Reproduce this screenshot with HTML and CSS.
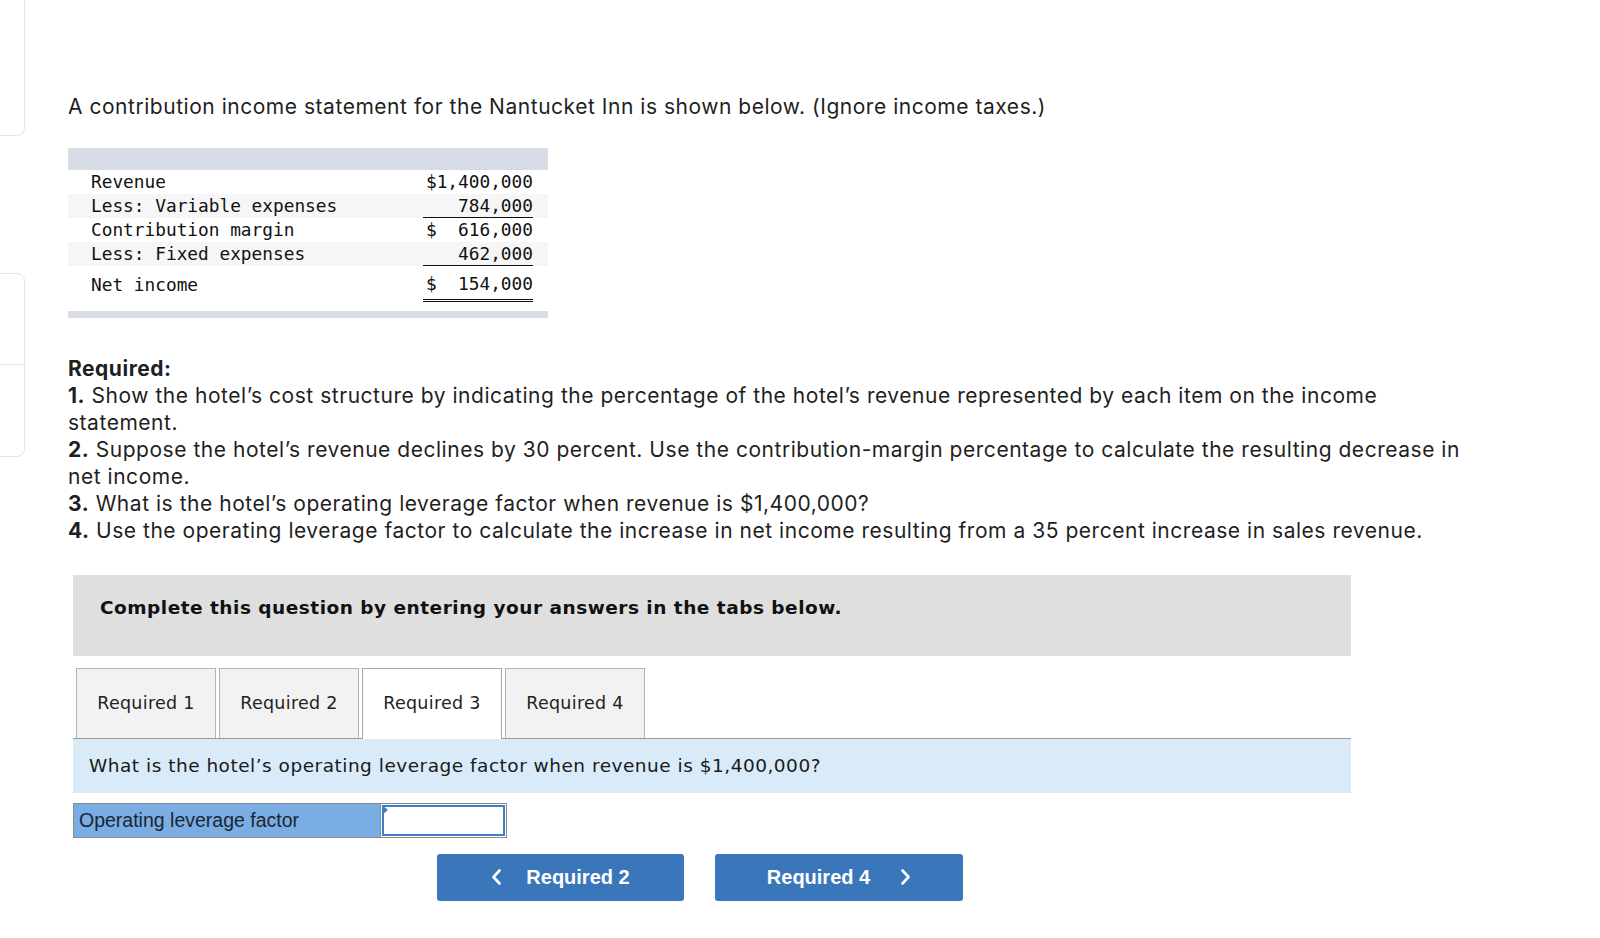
FILE: index.html
```html
<!DOCTYPE html>
<html lang="en">
<head>
<meta charset="utf-8">
<title>Nantucket Inn</title>
<link rel="stylesheet" href="styles.css">
</head>
<body>
<div class="page">
  <aside class="rail">
    <div class="rail-card rail-card-top"></div>
    <div class="rail-card rail-card-mid"><div class="rail-div"></div></div>
  </aside>
  <main class="main">
    <p class="intro">A contribution income statement for the Nantucket Inn is shown below. (Ignore income taxes.)</p>
    <div class="stmt">
      <div class="stmt-bar"></div>
      <table class="stmt-table">
        <tr><td class="lbl">Revenue</td><td class="num">$1,400,000</td><td class="pad"></td></tr>
        <tr class="alt"><td class="lbl">Less: Variable expenses</td><td class="num ul">  784,000</td><td class="pad"></td></tr>
        <tr><td class="lbl">Contribution margin</td><td class="num">$  616,000</td><td class="pad"></td></tr>
        <tr class="alt"><td class="lbl">Less: Fixed expenses</td><td class="num ul">  462,000</td><td class="pad"></td></tr>
        <tr class="net"><td class="lbl">Net income</td><td class="num dbl">$  154,000</td><td class="pad"></td></tr>
      </table>
      <div class="stmt-bar stmt-bar-bottom"></div>
    </div>
    <div class="required">
      <p><b>Required:</b></p>
      <p><b>1.</b> Show the hotel’s cost structure by indicating the percentage of the hotel’s revenue represented by each item on the income statement.</p>
      <p><b>2.</b> Suppose the hotel’s revenue declines by 30 percent. Use the contribution-margin percentage to calculate the resulting decrease in net income.</p>
      <p><b>3.</b> What is the hotel’s operating leverage factor when revenue is $1,400,000?</p>
      <p><b>4.</b> Use the operating leverage factor to calculate the increase in net income resulting from a 35 percent increase in sales revenue.</p>
    </div>
    <section class="question">
      <div class="instr">Complete this question by entering your answers in the tabs below.</div>
      <div class="tabs">
        <div class="tab">Required 1</div>
        <div class="tab">Required 2</div>
        <div class="tab tab-active">Required 3</div>
        <div class="tab">Required 4</div>
      </div>
      <div class="prompt">What is the hotel’s operating leverage factor when revenue is $1,400,000?</div>
      <div class="answer-row">
        <div class="answer-label">Operating leverage factor</div>
        <div class="answer-input"><span class="flag"></span></div>
      </div>
      <div class="nav">
        <button class="nav-btn"><svg class="chev" width="11" height="16" viewBox="0 0 11 16"><polyline points="8.5,1.5 2.5,8 8.5,14.5" fill="none" stroke="#fff" stroke-width="2.6" stroke-linecap="round" stroke-linejoin="round"/></svg><span>Required 2</span></button>
        <button class="nav-btn nav-next"><span>Required 4</span><svg class="chev" width="11" height="16" viewBox="0 0 11 16"><polyline points="2.5,1.5 8.5,8 2.5,14.5" fill="none" stroke="#fff" stroke-width="2.6" stroke-linecap="round" stroke-linejoin="round"/></svg></button>
      </div>
    </section>
  </main>
</div>
</body>
</html>
```
FILE: styles.css
```css
html, body {
  margin: 0;
  padding: 0;
  background: #fff;
}
body {
  font-family: Inter, "Open Sans", sans-serif;
  color: #1f1f1f;
}
.page {
  display: flex;
  align-items: flex-start;
  overflow: hidden;
  min-height: 938px;
}
.rail {
  width: 25px;
  flex-shrink: 0;
}
.rail-card {
  box-sizing: border-box;
  width: 40px;
  margin-left: -15px;
  border: 1px solid #e4e4e4;
  background: #fff;
}
.rail-card-top {
  margin-top: -12px;
  height: 148px;
  border-radius: 0 0 8px 0;
}
.rail-card-mid {
  margin-top: 137px;
  height: 184px;
  border-radius: 0 8px 8px 0;
  padding-top: 90px;
}
.rail-div {
  border-top: 1px solid #e4e4e4;
}
.main {
  margin-left: 43px;
  padding-top: 93px;
  width: 1420px;
}
.intro {
  margin: 0;
  font-size: 21px;
  letter-spacing: 0.53px;
  line-height: 27px;
}
.stmt {
  margin-top: 28px;
  width: 480px;
}
.stmt-bar {
  height: 22px;
  background: #d8dce6;
}
.stmt-bar-bottom {
  height: 7px;
  margin-top: 9px;
}
.stmt-table {
  width: 100%;
  border-collapse: collapse;
  font-family: "DejaVu Sans Mono", "Liberation Mono", monospace;
  font-size: 17.8px;
  color: #111;
}
.stmt-table td {
  padding: 0;
  height: 23.5px;
  line-height: 23.5px;
  white-space: pre;
}
.stmt-table .alt td {
  background: #f6f6f6;
}
.stmt-table .lbl {
  padding-left: 23px;
}
.stmt-table .num {
  width: 110px;
  text-align: right;
}
.stmt-table .pad {
  width: 15px;
}
.stmt-table .ul {
  border-bottom: 1px solid #111;
}
.stmt-table .net td {
  padding-top: 6px;
  padding-bottom: 3px;
}
.stmt-table .net .dbl {
  border-bottom: 3px double #111;
}
.required {
  margin-top: 37px;
  width: 1406px;
  font-size: 21px;
  letter-spacing: 0.53px;
  line-height: 27px;
}
.required p {
  margin: 0;
}
.question {
  margin-top: 31px;
  margin-left: 5px;
  width: 1278px;
}
.instr {
  box-sizing: border-box;
  height: 81px;
  background: #dfdfdf;
  padding: 22px 0 0 27px;
  font-family: "DejaVu Sans", Verdana, sans-serif;
  font-weight: bold;
  font-size: 18.5px;
  letter-spacing: 0.5px;
  line-height: 22px;
  color: #111;
}
.tabs {
  display: flex;
  align-items: flex-end;
  gap: 3px;
  margin-top: 12px;
  padding-left: 3px;
  border-bottom: 1px solid #999;
}
.tab {
  box-sizing: border-box;
  width: 140px;
  height: 70px;
  border: 1px solid #b4b4b4;
  border-bottom: none;
  background: #f2f2f2;
  display: flex;
  align-items: center;
  justify-content: center;
  font-family: "DejaVu Sans", Verdana, sans-serif;
  font-size: 17.5px;
  letter-spacing: 0.3px;
  color: #222;
}
.tab-active {
  background: #fff;
  border-color: #a8a8a8;
  height: 71px;
  padding-bottom: 1px;
  margin-bottom: -1px;
}
.prompt {
  box-sizing: border-box;
  height: 54px;
  background: #d9ebf9;
  padding-left: 16px;
  display: flex;
  align-items: center;
  font-family: "DejaVu Sans", Verdana, sans-serif;
  font-size: 18.5px;
  letter-spacing: 0.5px;
  color: #1a1a1a;
}
.answer-row {
  display: flex;
  box-sizing: border-box;
  margin-top: 10px;
  width: 434px;
  height: 35px;
  border: 1px solid #8a8a8a;
}
.answer-label {
  width: 301px;
  background: #7aade3;
  border-right: 1px solid #8a8a8a;
  padding-left: 5px;
  display: flex;
  align-items: center;
  font-family: "Liberation Sans", Arial, sans-serif;
  font-size: 19.5px;
  color: #1c2633;
}
.answer-input {
  position: relative;
  flex: 1;
  background: #fff;
  box-shadow: inset 0 0 0 1px #fff, inset 0 0 0 3px #3d7fc7;
}
.flag {
  position: absolute;
  left: 1px;
  top: 1px;
  width: 0;
  height: 0;
  border-top: 5px solid transparent;
  border-bottom: 5px solid transparent;
  border-left: 6px solid #3d7fc7;
}
.nav {
  display: flex;
  gap: 31px;
  margin-top: 16px;
  padding-left: 364px;
}
.nav-btn {
  width: 247px;
  height: 47px;
  border: none;
  border-radius: 3px;
  background: #3a76ba;
  color: #fff;
  display: flex;
  align-items: center;
  justify-content: center;
  gap: 24px;
  font-family: "Liberation Sans", Arial, sans-serif;
  font-weight: bold;
  font-size: 20px;
  padding: 0;
}
.nav-next {
  width: 248px;
  gap: 30px;
}
.chev {
  display: block;
}
```
